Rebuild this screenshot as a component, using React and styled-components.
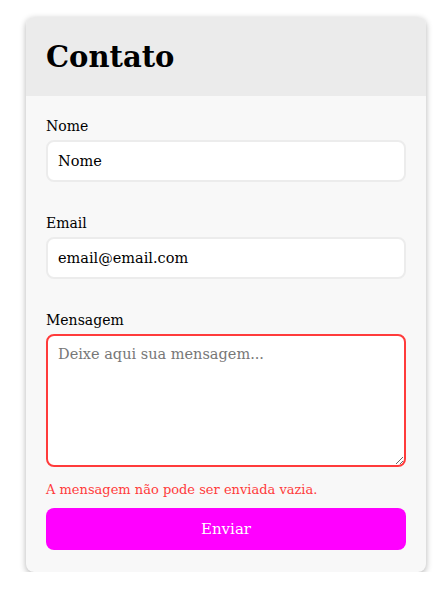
import styled, { createGlobalStyle } from "styled-components";

const GlobalStyle = createGlobalStyle`
  body {
    margin: 0;
    background: #ffffff;
    font-family: "DejaVu Serif", Georgia, serif;
  }
`;

const Card = styled.div`
  width: 400px;
  margin: 17px 0 0 26px;
  background-color: #f8f8f8;
  border-radius: 8px;
  box-shadow: 0 2px 6px rgba(0, 0, 0, 0.3);
  overflow: hidden;
`;

const Header = styled.div`
  background-color: #ebebeb;
  height: 79px;
  display: flex;
  align-items: center;
  padding: 0 20px;
`;

const Title = styled.h1`
  margin: 0;
  font-size: 29px;
  font-weight: bold;
  color: #000;
`;

const Form = styled.form`
  display: flex;
  flex-direction: column;
  padding: 21px 20px 22px;
`;

const Field = styled.div`
  display: flex;
  flex-direction: column;
  margin-bottom: ${(props) => (props.$last ? "0" : "32px")};
`;

const Label = styled.label`
  font-size: 14px;
  line-height: 18px;
  color: #000;
  margin-bottom: 5px;
`;

const Input = styled.input`
  height: 42px;
  box-sizing: border-box;
  padding: 0 10px;
  border: 2px solid #ececec;
  border-radius: 8px;
  background: #fff;
  font-family: inherit;
  font-size: 14.5px;
  color: #000;
  outline: none;
`;

const TextArea = styled.textarea`
  height: 133px;
  box-sizing: border-box;
  padding: 10px;
  border: 2px solid ${(props) => (props.$error ? "#ff3b3b" : "#ececec")};
  border-radius: 8px;
  background: #fff;
  font-family: inherit;
  font-size: 14.5px;
  color: #000;
  outline: none;
  resize: both;

  &::placeholder {
    color: #777;
  }
`;

const ErrorText = styled.p`
  margin: 15px 0 10px;
  font-size: 13px;
  line-height: 16px;
  color: #ff3b3b;
`;

const Button = styled.button`
  height: 42px;
  border: none;
  border-radius: 8px;
  background-color: #ff00ff;
  color: #fff;
  font-family: inherit;
  font-size: 15px;
  cursor: pointer;
`;

const App = () => {
  return (
    <>
      <GlobalStyle />
      <Card>
        <Header>
          <Title>Contato</Title>
        </Header>
        <Form onSubmit={(e) => e.preventDefault()}>
          <Field>
            <Label>Nome</Label>
            <Input defaultValue="Nome" />
          </Field>
          <Field>
            <Label>Email</Label>
            <Input defaultValue="email@email.com" />
          </Field>
          <Field $last>
            <Label>Mensagem</Label>
            <TextArea $error placeholder="Deixe aqui sua mensagem..." />
          </Field>
          <ErrorText>A mensagem não pode ser enviada vazia.</ErrorText>
          <Button type="submit">Enviar</Button>
        </Form>
      </Card>
    </>
  );
};

export default App;
